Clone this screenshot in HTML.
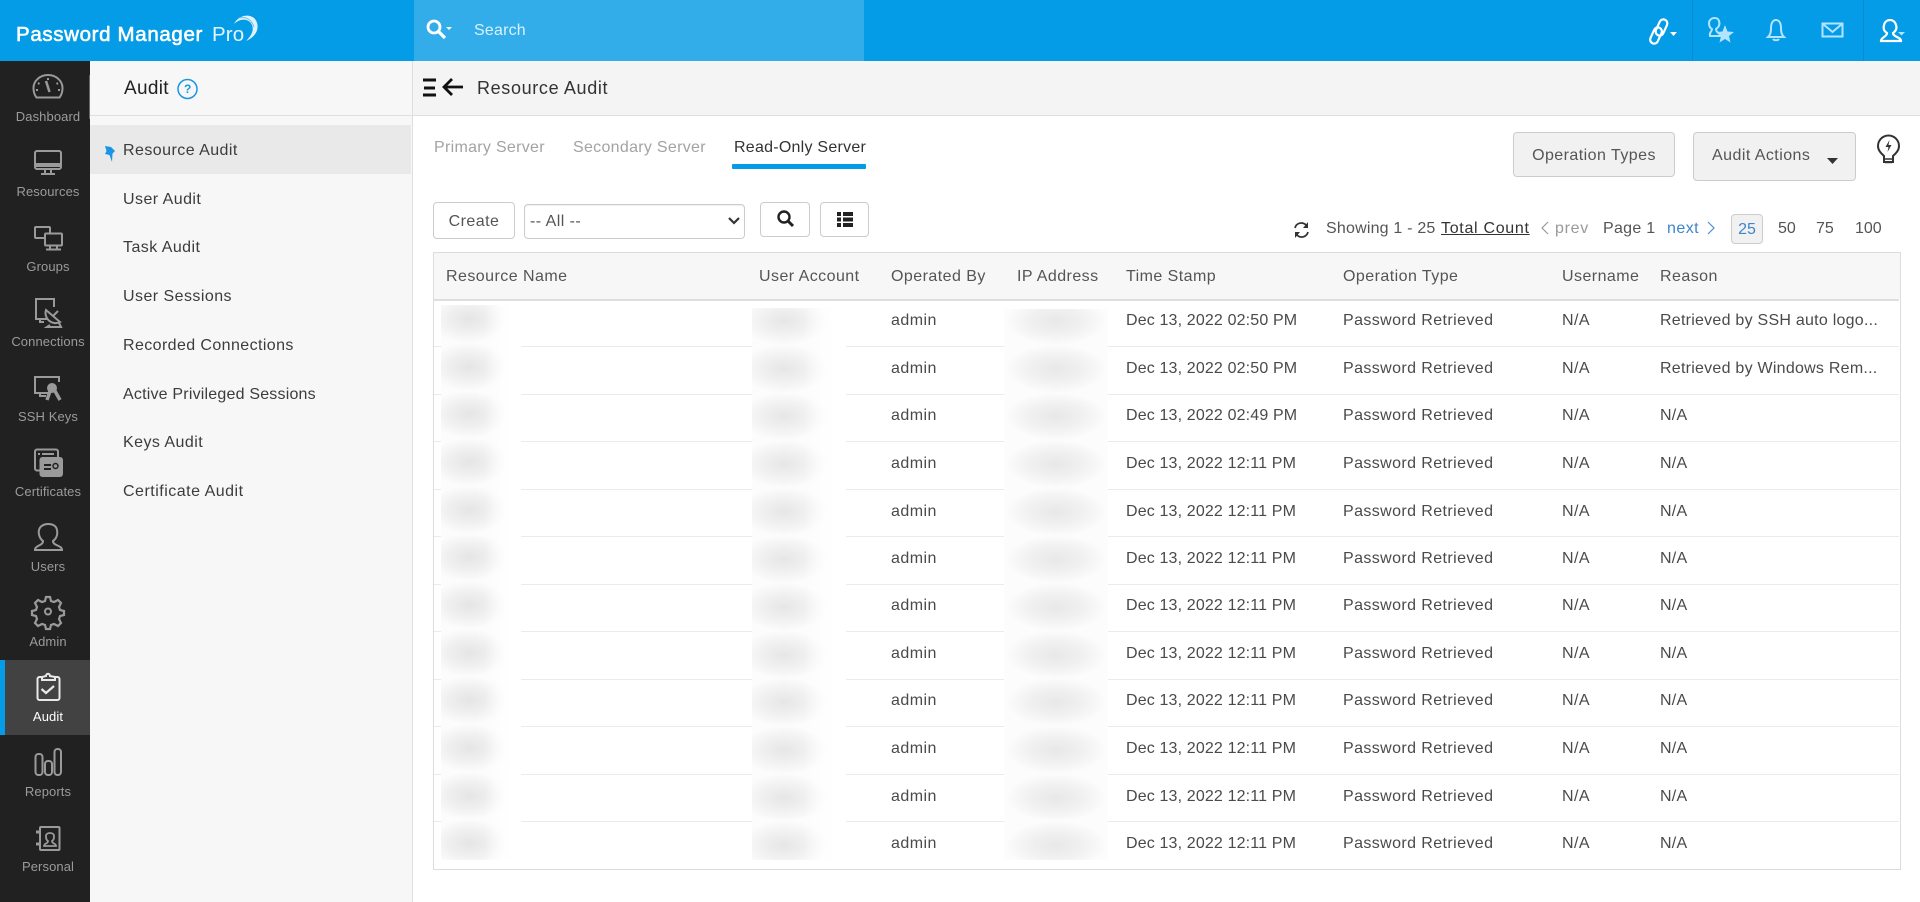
<!DOCTYPE html>
<html><head><meta charset="utf-8"><title>Resource Audit</title>
<style>
*{box-sizing:border-box}
html,body{margin:0;padding:0;width:1920px;height:902px;overflow:hidden;background:#fff}
body{font-family:"Liberation Sans",sans-serif;font-size:16px;letter-spacing:.45px;color:#444;position:relative}
.a{position:absolute;white-space:nowrap}
.t{position:absolute;white-space:nowrap;line-height:20px}
svg{position:absolute;left:0;top:0;overflow:visible}
.nl{position:absolute;left:0;width:96px;text-align:center;font-size:13px;letter-spacing:.1px;color:#9b9b9b;line-height:16px}
.m{position:absolute;left:123px;color:#3c3c3c;line-height:20px;white-space:nowrap}
.btn{position:absolute;border:1px solid #ccc;border-radius:4px;background:#fff;text-align:center;color:#555}
.r{position:absolute;left:434px;width:1465px;height:48px;border-top:1px solid #ebebeb}
.r span{position:absolute;top:12px;line-height:20px;white-space:nowrap;color:#4a4a4a}
.r.k span{top:11px}
.r span:nth-child(1){left:457px}
.r span:nth-child(2){left:692px;letter-spacing:.15px}
.r span:nth-child(3){left:909px;letter-spacing:.4px}
.r span:nth-child(4){left:1128px}
.r span:nth-child(5){left:1226px;letter-spacing:.25px}
.hc{position:absolute;top:267px;line-height:20px;color:#555;white-space:nowrap}
.bl{position:absolute;background-color:#fdfdfd;background-repeat:repeat-y}
</style></head><body>

<div class="a" style="left:0;top:0;width:1920px;height:61px;background:#049ce6"></div>
<div class="a" style="left:414px;top:0;width:450px;height:61px;background:#33ade9"></div>
<div class="a" style="left:16px;top:19px;font-size:20.5px;line-height:32px;letter-spacing:.65px;color:#fff;-webkit-text-stroke:.6px #fff">Password Manager</div>
<div class="a" style="left:212px;top:19px;font-size:20.5px;line-height:32px;letter-spacing:.1px;color:#e6f6ff">Pro</div>
<svg width="1920" height="61" fill="none" stroke="#fff">
<path d="M234 24C238 15 250 13 255 19C261 27 256 37 246 41C252 35 254 30 252 25C249 18 240 18 234 24Z" fill="#dff3fe" stroke="none"/>
<path d="M239 18C246 16 252 20 254 27" stroke="#6cc4f0" stroke-width="1"/>
<circle cx="434" cy="27" r="6" stroke-width="2.800"/><path d="M439 32l6 6" stroke-width="3.200"/>
<path d="M446 27h6l-3 3z" fill="#fff" stroke="none"/>
<g stroke-width="2.200"><rect x="-8.500" y="-4" width="17" height="8" rx="4" transform="translate(1656 35.500) rotate(-66)"/><rect x="-8.500" y="-4" width="17" height="8" rx="4" transform="translate(1661.500 27.500) rotate(-66)"/></g>
<path d="M1670 32h7l-3.500 4z" fill="#fff" stroke="none"/>
<path d="M1692.500 0v61M1863.500 0v61" stroke="#0a8ad0" stroke-width="1"/>
<g stroke="#b3e4ff" stroke-width="2"><path d="M1710 36h11c-1-3-5-3-5-7 3-2 4-5 3-8s-3-3-5-3-5 2-5 5 1 5 3 6c0 3-3 3-2 7z"/></g>
<path d="M1725 25l2.500 6.500 6.500.500-5 4 1.500 6.500-5.500-3.500-5.500 3.500 1.500-6.500-5-4 6.500-.500z" fill="#b3e4ff" stroke="none"/>
<path d="M1768 37h16c-2-2-3-4-3-9s-2-8-5-8-5 3-5 8-1 7-3 9zM1773 39c1 1.600 5 1.600 6 0M1776 19v2" stroke="#b3e4ff" stroke-width="2"/>
<path d="M1822.500 23.500h20v13h-20zM1823 24l9.500 8 9.500-8" stroke="#b3e4ff" stroke-width="2"/>
<path d="M1881 41h20c0-4-8-4-8-8 3-2 4-5 3-8-1-4-4-5-6-5s-5 1-6 5 0 6 3 8c0 4-6 4-6 8z" stroke-width="2.200"/>
<path d="M1898 32h7l-3.500 3.500z" fill="#b3e4ff" stroke="none"/>
</svg>
<div class="t" style="left:474px;top:21px;color:#d9f1fd;letter-spacing:.2px">Search</div>

<div class="a" style="left:0;top:61px;width:90px;height:841px;background:#212121"></div>
<div class="a" style="left:0;top:660px;width:90px;height:75px;background:#424242"></div>
<div class="a" style="left:0;top:660px;width:5px;height:75px;background:#049ce6"></div>
<div class="a" style="left:90px;top:61px;width:322px;height:841px;background:#f7f7f7"></div>
<div class="a" style="left:412px;top:61px;width:1px;height:841px;background:#dedede"></div>
<div class="a" style="left:89px;top:75px;width:1px;height:44px;background:#666"></div>
<div class="a" style="left:90px;top:115px;width:322px;height:1px;background:#dfdfdf"></div>
<div class="a" style="left:90px;top:125px;width:321px;height:49px;background:#e9e9e9"></div>
<div class="a" style="left:413px;top:61px;width:1507px;height:55px;background:#f4f4f4;border-bottom:1px solid #dedede"></div>

<svg width="90" height="902" fill="none" stroke="#9a9a9a" stroke-width="2">
<path d="M36.500 97.500h23c2-2.500 3-6 3-9.500a14.500 13 0 0 0-29 0c0 3.500 1 7 3 9.500z"/><path d="M46 81l3.500 11" stroke-width="2.500"/><path d="M48 78v2M38 83l1.500 1M58 83l-1.500 1M36 90h2M58 90h2"/>
<rect x="35" y="151" width="26" height="18" rx="2"/><path d="M35 165h26" stroke-width="4"/><path d="M45 169v4M51 169v4M41 174h14"/>
<rect x="35" y="227" width="15" height="11" rx="1"/><rect x="45" y="233.500" width="17" height="12" rx="1" fill="#212121"/><path d="M50 246v2.500M57 246v2.500M46 249.500h15"/>
<path d="M47 319h-11v-20h18v8"/><path d="M40 319v3h4"/><path d="M46 310l14 12a10 10 0 0 1-14-12zM53 316l5-5M50 325l-3 2h14l-2-4"/>
<path d="M51 393h-16v-16h24v5M40 393v3h6"/><circle cx="52" cy="388" r="4" fill="#9a9a9a"/><path d="M50 391l-3 9M55 391l5 9" stroke-width="3.500"/>
<rect x="35" y="449.500" width="23" height="21" rx="2"/><rect x="40.500" y="458" width="21.500" height="18" rx="2" fill="#9a9a9a" stroke="#9a9a9a"/><path d="M44 465h7M44 469h7" stroke="#212121"/><circle cx="55.500" cy="466" r="2.500" stroke="#212121" stroke-width="1.500"/><path d="M38 454h2M42 454h12"/>
<path d="M35 550h27c0-5-9-4-9-9 3-2 5-6 4-11s-5-6-9-6-8 2-9 6 1 9 4 11c0 5-8 4-8 9z"/>
<path d="M46 597h4l1 4 3 1 4-2 3 3-2 4 1 3 4 1v4l-4 1-1 3 2 4-3 3-4-2-3 1-1 4h-4l-1-4-3-1-4 2-3-3 2-4-1-3-4-1v-4l4-1 1-3-2-4 3-3 4 2 3-1z" stroke-width="2.200"/><circle cx="48" cy="611.500" r="3"/>
<path d="M42 677h-2.500a2 2 0 0 0-2 2v19a2 2 0 0 0 2 2h18a2 2 0 0 0 2-2v-19a2 2 0 0 0-2-2H55M42 680v-3l4-1c0-3 4-3 4 0l5 1v3z" stroke="#e8e8e8" stroke-width="2"/><path d="M41.500 689l4.500 4 8-7" stroke="#e8e8e8" stroke-width="2.200"/>
<rect x="35.500" y="754" width="7" height="21" rx="3"/><rect x="45" y="761" width="7" height="14" rx="3"/><rect x="54.500" y="749" width="6.500" height="26" rx="3"/>
<rect x="40" y="827" width="19.500" height="23" rx="1"/><path d="M44 846h12c0-3-4-2-4-5 2-1 2-3 2-5s-2-3-4-3-4 1-4 3 0 4 2 5c0 3-4 2-4 5z" stroke-width="1.800"/><path d="M36 832h5M36 844h5" stroke-width="3"/>
</svg>
<div class="nl" style="top:109px">Dashboard</div>
<div class="nl" style="top:184px">Resources</div>
<div class="nl" style="top:259px">Groups</div>
<div class="nl" style="top:334px">Connections</div>
<div class="nl" style="top:409px">SSH Keys</div>
<div class="nl" style="top:484px">Certificates</div>
<div class="nl" style="top:559px">Users</div>
<div class="nl" style="top:634px">Admin</div>
<div class="nl" style="top:709px;color:#fff">Audit</div>
<div class="nl" style="top:784px">Reports</div>
<div class="nl" style="top:859px">Personal</div>

<div class="t" style="left:124px;top:79px;font-size:19px;color:#222;letter-spacing:.3px">Audit</div>
<svg width="420" height="200" fill="none">
<circle cx="187.500" cy="89" r="9.500" stroke="#1a95e6" stroke-width="1.500"/>
<path d="M105 146l6 1 4 4-2.500 2.500-.5 8.500-2.500-7-4.500-1 1.500-3z" fill="#1a95e6"/>
</svg>
<div class="t" style="left:184px;top:79px;font-size:12px;font-weight:bold;color:#1a95e6">?</div>
<div class="m" style="top:141px">Resource Audit</div>
<div class="m" style="top:190px">User Audit</div>
<div class="m" style="top:238px">Task Audit</div>
<div class="m" style="top:287px">User Sessions</div>
<div class="m" style="top:336px;letter-spacing:.4px">Recorded Connections</div>
<div class="m" style="top:385px;letter-spacing:.2px">Active Privileged Sessions</div>
<div class="m" style="top:433px">Keys Audit</div>
<div class="m" style="top:482px;letter-spacing:.5px">Certificate Audit</div>

<svg width="500" height="110" fill="none" stroke="#111">
<path d="M423 80h13M424 88h11M423 95h13" stroke-width="3"/>
<path d="M463 87h-19M452 79l-8 8 8 8" stroke-width="2.800"/>
</svg>
<div class="t" style="left:477px;top:78px;font-size:18px;letter-spacing:.65px;color:#333">Resource Audit</div>

<div class="t" style="left:434px;top:138px;color:#a3a3a3;letter-spacing:.3px">Primary Server</div>
<div class="t" style="left:573px;top:138px;color:#a3a3a3;letter-spacing:.3px">Secondary Server</div>
<div class="t" style="left:734px;top:138px;color:#333;letter-spacing:.25px">Read-Only Server</div>
<div class="a" style="left:732px;top:164px;width:134px;height:5px;background:#049ce6;border-radius:1px"></div>

<div class="btn" style="left:433px;top:202px;width:82px;height:37px;line-height:37px">Create</div>
<div class="btn" style="left:524px;top:204px;width:221px;height:35px;line-height:33px;text-align:left;padding-left:5px;box-shadow:inset 0 1px 1px #eee">-- All --</div>
<div class="btn" style="left:760px;top:202px;width:50px;height:35px"></div>
<div class="btn" style="left:820px;top:202px;width:49px;height:35px"></div>
<svg width="900" height="260" fill="none" stroke="#222">
<path d="M729 218l5 5 5-5" stroke-width="2.200" stroke="#333"/>
<circle cx="784" cy="217" r="5.500" stroke-width="2.400"/><path d="M788 221l5 5" stroke-width="3"/>
<g fill="#222" stroke="none"><rect x="837" y="212" width="4" height="4"/><rect x="843" y="212" width="10" height="4"/><rect x="837" y="217.500" width="4" height="4"/><rect x="843" y="217.500" width="10" height="4"/><rect x="837" y="223" width="4" height="4"/><rect x="843" y="223" width="10" height="4"/></g>
</svg>

<div class="btn" style="left:1513px;top:132px;width:162px;height:45px;background:#f1f1f1;line-height:45px">Operation Types</div>
<div class="btn" style="left:1693px;top:132px;width:163px;height:49px;background:#f1f1f1;line-height:45px;text-align:left;padding-left:18px">Audit Actions</div>
<svg width="1920" height="260" fill="none" stroke="#333">
<path d="M1827 158h11l-5.500 6z" fill="#333" stroke="none"/>
<path d="M1884 156c-2-2-6-5-6-10a10.500 10.500 0 0 1 21 0c0 5-4 8-6 10v6h-9z" stroke-width="2"/>
<path d="M1889.500 140l-4 7h3l-1 5 4-7h-3z" fill="#333" stroke="none"/>
<path d="M1885 159h7M1885 162.500h7" stroke-width="1.500"/>
<path d="M1295 228a6.500 6.500 0 0 1 11-3l1.500 1.500M1308 232a6.500 6.500 0 0 1-11 3l-1.500-1.500" stroke-width="1.700"/>
<path d="M1308 222v6h-5zM1295 238v-6h5z" fill="#333" stroke="none"/>
<path d="M1548 222l-6 6 6 6" stroke="#999" stroke-width="1.200"/>
<path d="M1708 222l6 6-6 6" stroke="#4a8fd0" stroke-width="1.200"/>
</svg>
<div class="t" style="left:1326px;top:219px;color:#555;letter-spacing:.2px">Showing 1 - 25</div>
<div class="t" style="left:1441px;top:219px;letter-spacing:.7px;text-decoration:underline;color:#333">Total Count</div>
<div class="t" style="left:1555px;top:219px;color:#999;letter-spacing:.7px">prev</div>
<div class="t" style="left:1603px;top:219px;color:#555;letter-spacing:.3px">Page 1</div>
<div class="t" style="left:1667px;top:219px;color:#3f85c8">next</div>
<div class="btn" style="left:1731px;top:214px;width:32px;height:30px;background:#f1f1f1;color:#3f85c8;line-height:29px;letter-spacing:0">25</div>
<div class="t" style="left:1778px;top:219px;color:#555;letter-spacing:0">50</div>
<div class="t" style="left:1816px;top:219px;color:#555;letter-spacing:0">75</div>
<div class="t" style="left:1855px;top:219px;color:#555;letter-spacing:0">100</div>

<div class="a" style="left:433px;top:252px;width:1468px;height:618px;border:1px solid #dcdcdc"></div>
<div class="a" style="left:434px;top:253px;width:1466px;height:46px;background:#f7f7f7"></div>
<div class="hc" style="left:446px">Resource Name</div>
<div class="hc" style="left:759px">User Account</div>
<div class="hc" style="left:891px">Operated By</div>
<div class="hc" style="left:1017px">IP Address</div>
<div class="hc" style="left:1126px">Time Stamp</div>
<div class="hc" style="left:1343px">Operation Type</div>
<div class="hc" style="left:1562px">Username</div>
<div class="hc" style="left:1660px">Reason</div>

<div class="r" style="top:299px;border-top:2px solid #dedede"><span style="top:10px">admin</span><span style="top:10px">Dec 13, 2022 02:50 PM</span><span style="top:10px">Password Retrieved</span><span style="top:10px">N/A</span><span style="top:10px">Retrieved by SSH auto logo...</span></div>
<div class="r" style="top:346px"><span>admin</span><span>Dec 13, 2022 02:50 PM</span><span>Password Retrieved</span><span>N/A</span><span>Retrieved by Windows Rem...</span></div>
<div class="r k" style="top:394px"><span>admin</span><span>Dec 13, 2022 02:49 PM</span><span>Password Retrieved</span><span>N/A</span><span>N/A</span></div>
<div class="r" style="top:441px"><span>admin</span><span>Dec 13, 2022 12:11 PM</span><span>Password Retrieved</span><span>N/A</span><span>N/A</span></div>
<div class="r" style="top:489px"><span>admin</span><span>Dec 13, 2022 12:11 PM</span><span>Password Retrieved</span><span>N/A</span><span>N/A</span></div>
<div class="r" style="top:536px"><span>admin</span><span>Dec 13, 2022 12:11 PM</span><span>Password Retrieved</span><span>N/A</span><span>N/A</span></div>
<div class="r k" style="top:584px"><span>admin</span><span>Dec 13, 2022 12:11 PM</span><span>Password Retrieved</span><span>N/A</span><span>N/A</span></div>
<div class="r" style="top:631px"><span>admin</span><span>Dec 13, 2022 12:11 PM</span><span>Password Retrieved</span><span>N/A</span><span>N/A</span></div>
<div class="r k" style="top:679px"><span>admin</span><span>Dec 13, 2022 12:11 PM</span><span>Password Retrieved</span><span>N/A</span><span>N/A</span></div>
<div class="r" style="top:726px"><span>admin</span><span>Dec 13, 2022 12:11 PM</span><span>Password Retrieved</span><span>N/A</span><span>N/A</span></div>
<div class="r" style="top:774px"><span>admin</span><span>Dec 13, 2022 12:11 PM</span><span>Password Retrieved</span><span>N/A</span><span>N/A</span></div>
<div class="r" style="top:821px"><span>admin</span><span>Dec 13, 2022 12:11 PM</span><span>Password Retrieved</span><span>N/A</span><span>N/A</span></div>

<div class="bl" style="left:441px;top:305px;width:80px;height:555px;background-image:linear-gradient(90deg,rgba(255,255,255,0) 55%,#fff 90%),radial-gradient(ellipse 40px 24px at 28px 24px,#e5e5e5,#efefef 50%,#f8f8f8 85%,#fcfcfc 100%);background-size:100% 100%,100% 47.67px;background-position:0 0,0 -10px"></div>
<div class="bl" style="left:752px;top:308px;width:94px;height:552px;background-image:linear-gradient(90deg,rgba(255,255,255,0) 55%,#fff 90%),radial-gradient(ellipse 44px 24px at 32px 24px,#e6e6e6,#f0f0f0 50%,#f8f8f8 85%,#fcfcfc 100%);background-size:100% 100%,100% 47.67px;background-position:0 0,0 -11px"></div>
<div class="bl" style="left:1004px;top:309px;width:104px;height:551px;background-image:radial-gradient(ellipse 50px 24px at 52px 24px,#e8e8e8,#f0f0f0 50%,#f8f8f8 85%,#fcfcfc 100%);background-size:100% 47.67px;background-position:0 -12px"></div>
</body></html>
